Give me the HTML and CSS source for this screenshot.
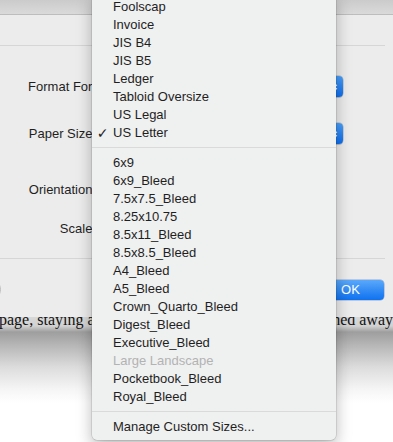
FILE: index.html
```html
<!DOCTYPE html>
<html lang="en">
<head>
    <meta charset="UTF-8">
    <meta name="viewport" content="width=device-width, initial-scale=1.0">
    <title>Page Setup</title>
    <link rel="stylesheet" href="styles.css">
</head>
<body>
    <div class="screen">
        <div class="dialog">
            <div class="titlebar"></div>
            <div class="dialog-top"></div>
            <div class="rule"></div>

            <div class="form">
                <div class="row row-format">
                    <span class="label">Format For:</span>
                    <div class="popup">
                        <span class="popup-text">Any Printer</span>
                        <span class="popup-cap">
                            <svg width="8" height="12" viewBox="0 0 8 12" fill="none" stroke="#fff" stroke-width="1.4" stroke-linecap="round" stroke-linejoin="round">
                                <path d="M1.5 4.5 4 2l2.5 2.5"></path>
                                <path d="M1.5 7.5 4 10l2.5-2.5"></path>
                            </svg>
                        </span>
                    </div>
                </div>
                <div class="row row-paper">
                    <span class="label">Paper Size:</span>
                    <div class="popup">
                        <span class="popup-text">US Letter</span>
                        <span class="popup-cap">
                            <svg width="8" height="12" viewBox="0 0 8 12" fill="none" stroke="#fff" stroke-width="1.4" stroke-linecap="round" stroke-linejoin="round">
                                <path d="M1.5 4.5 4 2l2.5 2.5"></path>
                                <path d="M1.5 7.5 4 10l2.5-2.5"></path>
                            </svg>
                        </span>
                    </div>
                </div>
                <div class="row row-orientation">
                    <span class="label">Orientation:</span>
                </div>
                <div class="row row-scale">
                    <span class="label">Scale:</span>
                </div>
            </div>

            <div class="rule"></div>

            <div class="footer">
                <span class="help">?</span>
                <button class="btn">Cancel</button>
                <button class="btn btn-default">OK</button>
            </div>
        </div>

        <div class="page">
            <p class="page-line">
                <span class="page-left">page, staying at home for weeks while the letters rem</span>
                <span class="page-right">ained away</span>
            </p>
        </div>

        <!-- paper size menu, open over the dialog -->
        <ul class="menu">
            <li class="item"><span class="check"></span>Foolscap</li>
            <li class="item"><span class="check"></span>Invoice</li>
            <li class="item"><span class="check"></span>JIS B4</li>
            <li class="item"><span class="check"></span>JIS B5</li>
            <li class="item"><span class="check"></span>Ledger</li>
            <li class="item"><span class="check"></span>Tabloid Oversize</li>
            <li class="item"><span class="check"></span>US Legal</li>
            <li class="item"><span class="check">&#10003;</span>US Letter</li>
            <li class="sep"></li>
            <li class="item"><span class="check"></span>6x9</li>
            <li class="item"><span class="check"></span>6x9_Bleed</li>
            <li class="item"><span class="check"></span>7.5x7.5_Bleed</li>
            <li class="item"><span class="check"></span>8.25x10.75</li>
            <li class="item"><span class="check"></span>8.5x11_Bleed</li>
            <li class="item"><span class="check"></span>8.5x8.5_Bleed</li>
            <li class="item"><span class="check"></span>A4_Bleed</li>
            <li class="item"><span class="check"></span>A5_Bleed</li>
            <li class="item"><span class="check"></span>Crown_Quarto_Bleed</li>
            <li class="item"><span class="check"></span>Digest_Bleed</li>
            <li class="item"><span class="check"></span>Executive_Bleed</li>
            <li class="item disabled"><span class="check"></span>Large Landscape</li>
            <li class="item"><span class="check"></span>Pocketbook_Bleed</li>
            <li class="item"><span class="check"></span>Royal_Bleed</li>
            <li class="sep"></li>
            <li class="item"><span class="check"></span>Manage Custom Sizes...</li>
        </ul>
    </div>
</body>
</html>
```

FILE: styles.css
```css
:root {
    --dialog: #ececec;
    --rule: #d6d6d6;
    --menu: #eff0f0;
    --text: #1f1f1f;
    --muted: #b3b3b3;
    --blue-top: #4aa0fa;
    --blue-bottom: #0d6eef;
}

html, body {
    margin: 0;
    padding: 0;
}

body {
    font-family: 'Liberation Sans', Arial, sans-serif;
    font-size: 13px;
    color: var(--text);
    background: #ffffff;
    width: 393px;
    height: 442px;
    overflow: hidden;
}

.screen {
    position: relative;
    width: 393px;
    height: 442px;
    overflow: hidden;
}

/* dialog sheet */

.dialog {
    position: relative;
    z-index: 1;
    background-color: var(--dialog);
}

.titlebar {
    height: 14px;
    background: linear-gradient(#cbcbcb, #dadada);
    border-bottom: 1px solid #bdbdbd;
}

.dialog-top {
    height: 30px;
}

.rule {
    height: 1px;
    margin-right: 8px;
    background-color: var(--rule);
}

.form {
    padding-bottom: 19px;
}

.row {
    display: flex;
    align-items: center;
    width: 343px;
    height: 21px;
}

.row-format { margin-top: 30px; }
.row-paper { margin-top: 26px; }
.row-orientation { margin-top: 35px; }
.row-scale { margin-top: 18px; }

.label {
    width: 96px;
    text-align: right;
    white-space: nowrap;
}

.popup {
    margin-left: auto;
    width: 200px;
    height: 21px;
    display: flex;
    align-items: center;
    background: #ffffff;
    border-radius: 4px;
    box-shadow: 0 0 0 0.5px rgba(0, 0, 0, 0.25), 0 1px 1px rgba(0, 0, 0, 0.1);
    overflow: hidden;
}

.popup-text {
    flex: 1;
    padding-left: 8px;
}

.popup-cap {
    width: 18px;
    height: 100%;
    display: flex;
    align-items: center;
    justify-content: center;
    background: linear-gradient(var(--blue-top), var(--blue-bottom));
}

.footer {
    display: flex;
    align-items: center;
    justify-content: flex-end;
    gap: 12px;
    padding: 20px 9px 17px 0;
}

.help {
    margin-left: -20px;
    margin-right: auto;
    width: 21px;
    height: 21px;
    border-radius: 50%;
    background: #fbfbfb;
    border: 1px solid #b8b8b8;
    box-sizing: border-box;
    font-size: 12px;
    line-height: 19px;
    text-align: center;
}

.btn {
    height: 20px;
    padding: 0;
    width: 67px;
    font-family: inherit;
    font-size: 13px;
    color: var(--text);
    background: #ffffff;
    border: none;
    border-radius: 4px;
    box-shadow: 0 0 0 0.5px rgba(0, 0, 0, 0.25), 0 1px 1px rgba(0, 0, 0, 0.1);
}

.btn-default {
    color: #ffffff;
    background: linear-gradient(#5aa8fa, #0f72f0);
    box-shadow: 0 0 0 0.5px rgba(0, 60, 180, 0.4);
}

/* document behind the sheet */

.page {
    margin-top: -6px;
    height: 132px;
    background: linear-gradient(#dcdcdc 0, #d2d2d2 15px, #9e9e9e 21px, #b6b6b6 34px, #dcdcdc 56px, #f5f5f5 78px, #ffffff 92px);
}

.page-line {
    margin: 0;
    display: flex;
    font-family: 'Liberation Serif', 'Times New Roman', serif;
    font-size: 16px;
    line-height: 18px;
    color: #111111;
    white-space: nowrap;
}

.page-left {
    width: 338px;
    margin-left: -1px;
    overflow: hidden;
}

/* popup menu */

.menu {
    position: absolute;
    z-index: 2;
    top: -6px;
    left: 92px;
    width: 244px;
    margin: 0;
    padding: 4px 0;
    list-style: none;
    background-color: var(--menu);
    border-radius: 0 0 5px 5px;
    box-shadow: 0 0 0 0.5px rgba(0, 0, 0, 0.18), 0 6px 16px rgba(0, 0, 0, 0.28);
}

.item {
    display: flex;
    height: 18px;
    line-height: 18px;
    white-space: nowrap;
}

.item.disabled {
    color: var(--muted);
}

.check {
    width: 21px;
    text-align: center;
    font-family: 'DejaVu Sans', sans-serif;
    font-size: 14px;
}

.sep {
    height: 1px;
    margin: 5px 0 6px;
    background-color: #dadada;
}
```
